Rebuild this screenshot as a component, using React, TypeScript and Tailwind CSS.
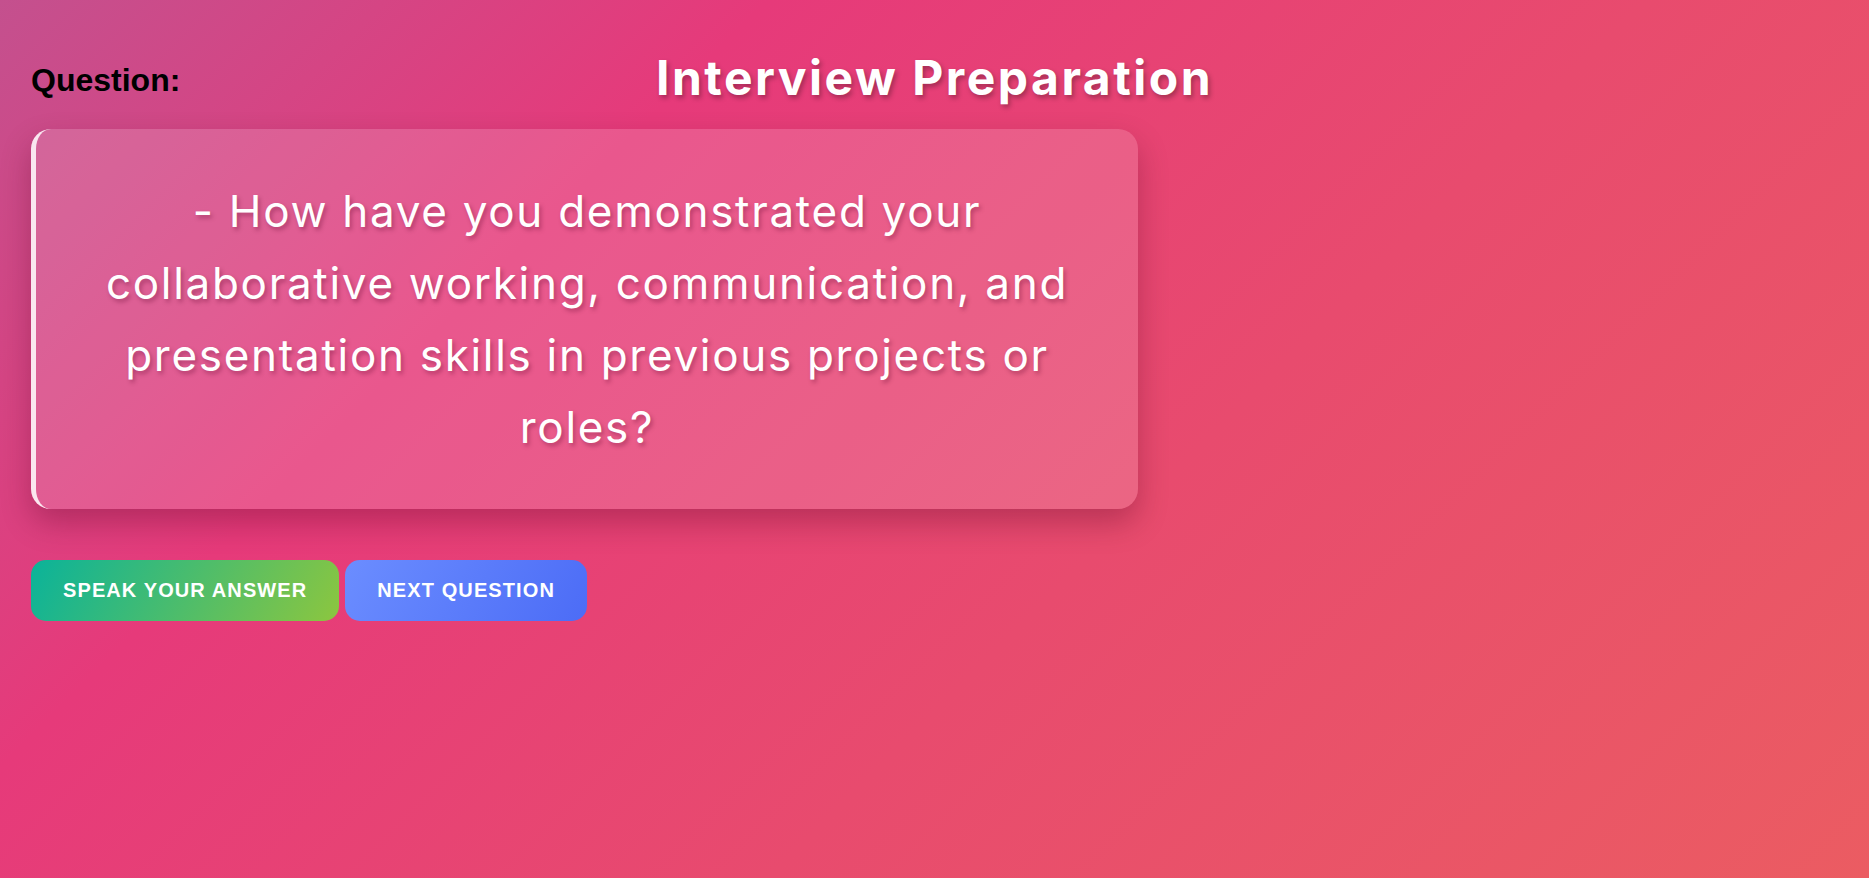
import { useState } from 'react';

const questions = [
  '- How have you demonstrated your collaborative working, communication, and presentation skills in previous projects or roles?',
  '- Tell us about a time you had to learn a new technology quickly.',
];

export default function App() {
  const [index, setIndex] = useState(0);

  return (
    <div className="min-h-screen bg-[linear-gradient(135deg,#c4508e_0%,#e63a7a_28%,#e84b6e_60%,#eb5c62_100%)] px-[31px] pt-[54px] font-['Liberation_Sans',Arial,sans-serif]">
      {/* Header */}
      <header className="grid grid-cols-[1fr_auto_1fr] items-center">
        <h2 className="mt-[3px] text-[32px] font-bold leading-none text-black">Question:</h2>
        <h1 className="font-['Inter',sans-serif] text-[48px] font-bold leading-none tracking-[2.5px] text-white [text-shadow:2px_3px_5px_rgba(0,0,0,0.3)]">
          Interview Preparation
        </h1>
        <div />
      </header>

      {/* Question card */}
      <section className="mt-[27px] w-[1107px] rounded-[20px] border-l-[5px] border-white/85 bg-white/15 px-12 py-[46px] text-center shadow-[0_14px_30px_rgba(80,0,30,0.3)]">
        <p className="font-['Inter',sans-serif] text-[44px] font-normal leading-[72px] tracking-[1.7px] text-white [text-shadow:2px_3px_4px_rgba(90,0,40,0.35)]">
          {questions[index]}
        </p>
      </section>

      {/* Actions */}
      <div className="mt-[51px] flex gap-[6px]">
        <button className="rounded-[15px] bg-[linear-gradient(120deg,#0ab39a,#8cc63f)] px-8 py-[19px] text-[20px] font-bold uppercase leading-[23px] tracking-[1.1px] text-white">
          Speak your answer
        </button>
        <button
          onClick={() => setIndex((index + 1) % questions.length)}
          className="rounded-[15px] bg-[linear-gradient(120deg,#6b8dff,#4c6cf6)] px-8 py-[19px] text-[20px] font-bold uppercase leading-[23px] tracking-[1.1px] text-white"
        >
          Next question
        </button>
      </div>
    </div>
  );
}
